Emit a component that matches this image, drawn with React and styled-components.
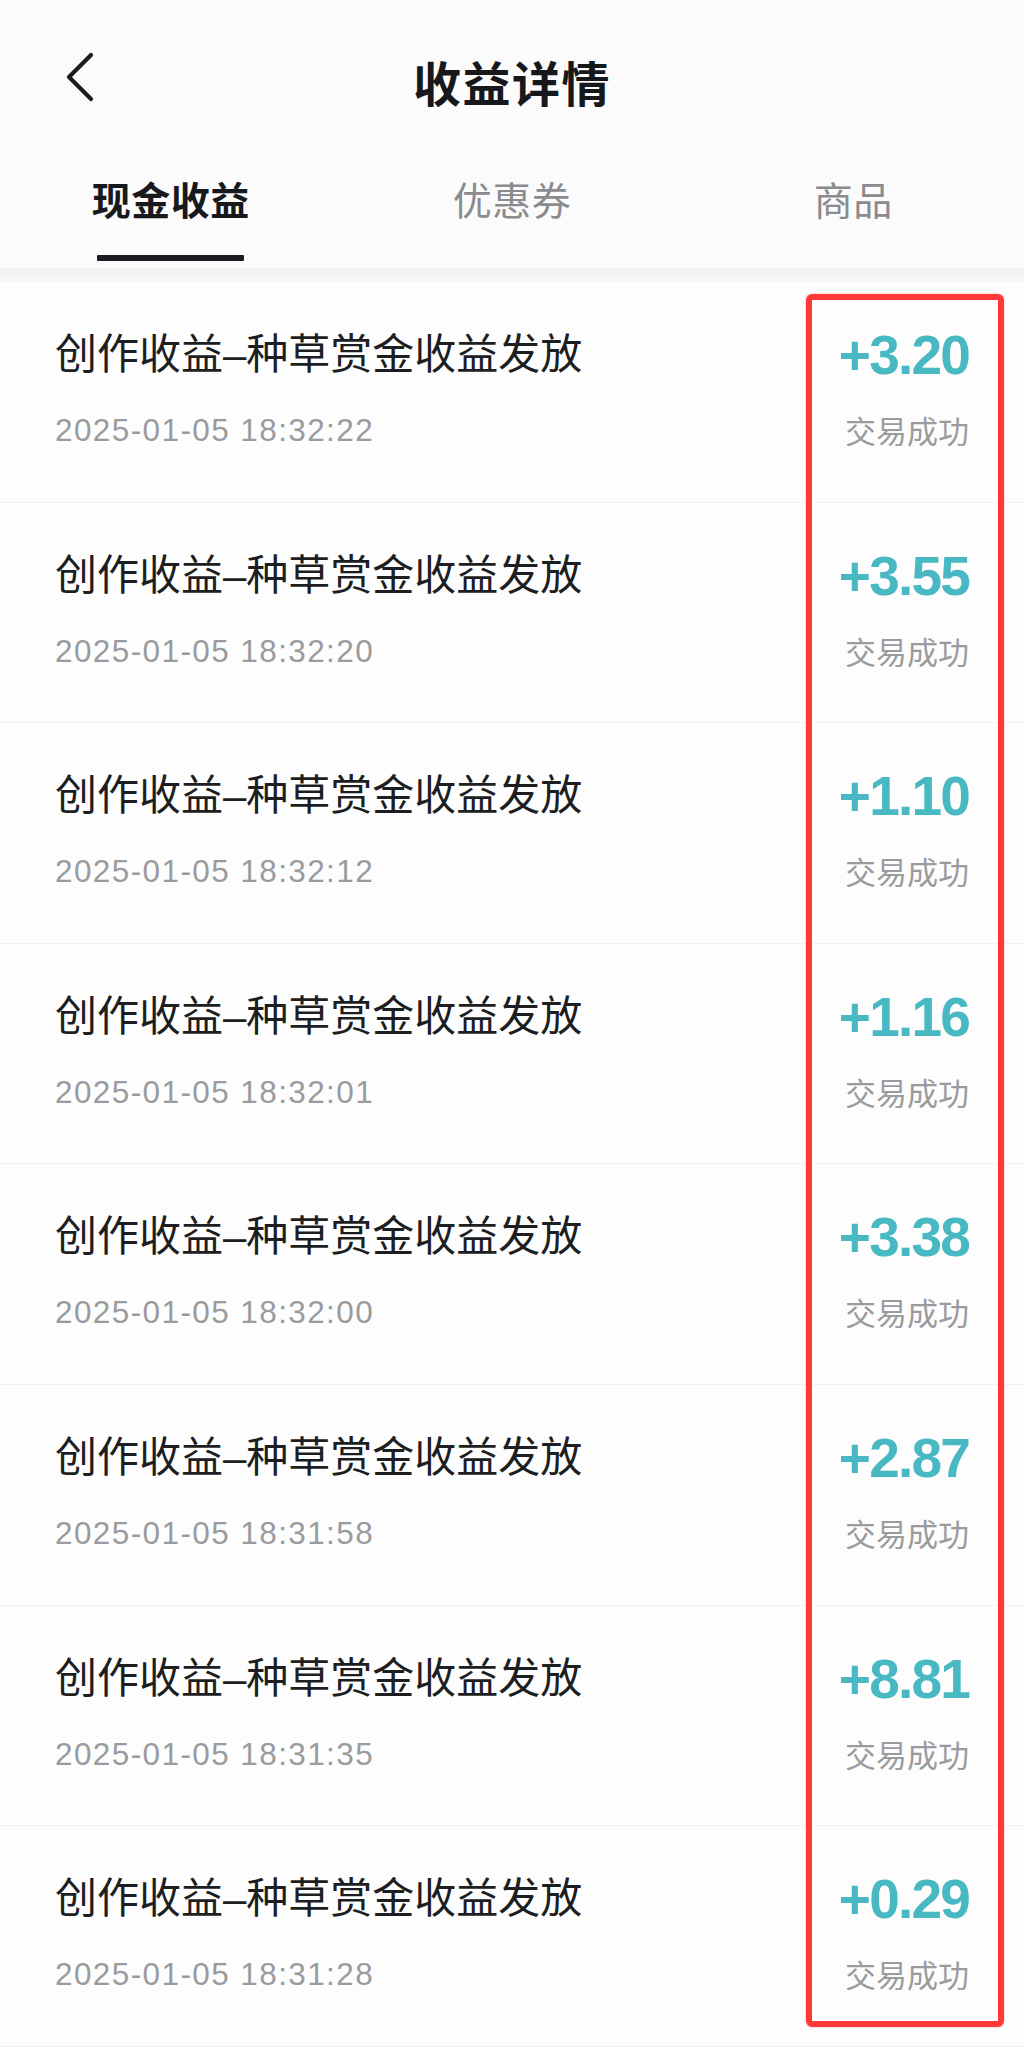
import React from "react";
import styled, { createGlobalStyle } from "styled-components";

const GlobalStyle = createGlobalStyle`
  html, body {
    margin: 0;
    padding: 0;
    background: #fdfdfd;
  }
  body {
    font-family: "Liberation Sans", "Noto Sans CJK SC", sans-serif;
    -webkit-font-smoothing: antialiased;
  }
`;

const Page = styled.div`
  width: 1024px;
  min-height: 2048px;
  background: #fdfdfd;
  display: flex;
  flex-direction: column;
`;

const NavBar = styled.header`
  height: 162px;
  display: flex;
  align-items: center;
  justify-content: center;
  position: relative;
  background: #fbfbfb;
`;

const BackButton = styled.button`
  position: absolute;
  left: 60px;
  top: 50px;
  width: 40px;
  height: 54px;
  padding: 0;
  border: 0;
  background: transparent;
  display: flex;
  align-items: center;
  justify-content: center;
`;

const Title = styled.h1`
  margin: 0;
  font-family: "Noto Sans CJK SC", sans-serif;
  font-size: 48px;
  font-weight: 700;
  color: #16181c;
  letter-spacing: 1.5px;
  line-height: 1;
`;

const Tabs = styled.nav`
  height: 106px;
  display: grid;
  grid-template-columns: repeat(3, 1fr);
  background: #fbfbfb;
`;

const Tab = styled.div`
  display: flex;
  flex-direction: column;
  align-items: center;
`;

const TabLabel = styled.span`
  margin-top: 13px;
  font-family: "Noto Sans CJK SC", sans-serif;
  font-size: 39px;
  line-height: 46px;
  letter-spacing: 0.5px;
  font-weight: ${(p) => (p.$active ? 700 : 400)};
  color: ${(p) => (p.$active ? "#17191d" : "#8a8b8e")};
`;

const Underline = styled.span`
  margin-top: 34px;
  width: 147px;
  height: 6px;
  border-radius: 1px;
  background: ${(p) => (p.$active ? "#1b1d22" : "transparent")};
`;

const Band = styled.div`
  height: 14px;
  background: linear-gradient(#f1f1f1, #f8f8f8);
`;

const List = styled.section`
  position: relative;
  display: flex;
  flex-direction: column;
  background: #fdfdfd;
`;

const Row = styled.div`
  height: 220.6px;
  box-sizing: border-box;
  display: flex;
  justify-content: space-between;
  padding: 0 55px;
  border-bottom: 1.5px solid #f1f1f1;
`;

const LeftCol = styled.div`
  display: flex;
  flex-direction: column;
`;

const RightCol = styled.div`
  display: flex;
  flex-direction: column;
  align-items: flex-end;
`;

const ItemTitle = styled.div`
  margin-top: 48px;
  font-family: "Liberation Sans", "Noto Sans CJK SC", sans-serif;
  font-size: 42px;
  line-height: 50px;
  color: #1c1e22;
`;

const ItemDate = styled.div`
  margin-top: 32px;
  font-size: 31.5px;
  line-height: 36px;
  color: #9a9b9e;
  letter-spacing: 1.4px;
`;

const Amount = styled.div`
  margin-top: 45px;
  font-size: 55px;
  line-height: 56px;
  font-weight: 700;
  color: #48b8c2;
  letter-spacing: -1.8px;
`;

const Status = styled.div`
  margin-top: 29px;
  font-family: "Noto Sans CJK SC", sans-serif;
  font-size: 31px;
  line-height: 36px;
  color: #9a9b9e;
`;

const Highlight = styled.div`
  position: absolute;
  top: 12px;
  bottom: 20px;
  right: 20px;
  width: 198px;
  box-sizing: border-box;
  border: 6px solid #ff3838;
  border-radius: 6px;
  box-shadow: 0 0 2px rgba(255, 56, 56, 0.5);
  pointer-events: none;
`;

const items = [
  { time: "18:32:22", amount: "+3.20" },
  { time: "18:32:20", amount: "+3.55" },
  { time: "18:32:12", amount: "+1.10" },
  { time: "18:32:01", amount: "+1.16" },
  { time: "18:32:00", amount: "+3.38" },
  { time: "18:31:58", amount: "+2.87" },
  { time: "18:31:35", amount: "+8.81" },
  { time: "18:31:28", amount: "+0.29" },
];

const tabs = ["现金收益", "优惠券", "商品"];

export default function App() {
  return (
    <Page>
      <GlobalStyle />
      <NavBar>
        <BackButton aria-label="返回">
          <svg width="30" height="50" viewBox="0 0 30 50" fill="none">
            <polyline
              points="26,3 4,25 26,47"
              stroke="#1a1c20"
              strokeWidth="4.2"
              strokeLinecap="round"
              strokeLinejoin="round"
            />
          </svg>
        </BackButton>
        <Title>收益详情</Title>
      </NavBar>
      <Tabs>
        {tabs.map((t, i) => (
          <Tab key={t}>
            <TabLabel $active={i === 0}>{t}</TabLabel>
            <Underline $active={i === 0} />
          </Tab>
        ))}
      </Tabs>
      <Band />
      <List>
        {items.map((it, i) => (
          <Row key={i}>
            <LeftCol>
              <ItemTitle>创作收益–种草赏金收益发放</ItemTitle>
              <ItemDate>2025-01-05 {it.time}</ItemDate>
            </LeftCol>
            <RightCol>
              <Amount>{it.amount}</Amount>
              <Status>交易成功</Status>
            </RightCol>
          </Row>
        ))}
        <Highlight />
      </List>
    </Page>
  );
}
